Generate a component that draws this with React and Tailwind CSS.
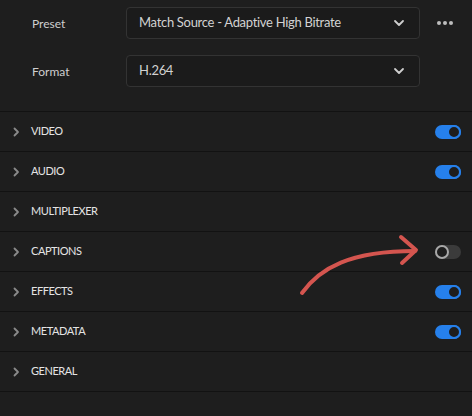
import { useState } from 'react'

function ChevronDown() {
  return (
    <svg width="12" height="8" viewBox="0 0 12 8" fill="none" stroke="#cfcfcf" strokeWidth="1.8" strokeLinecap="round" strokeLinejoin="round">
      <path d="M2 2l4 4 4-4" />
    </svg>
  )
}

function ChevronRight() {
  return (
    <svg width="8" height="10" viewBox="0 0 8 10" fill="none" stroke="#8a8a8a" strokeWidth="1.8" strokeLinecap="round" strokeLinejoin="round">
      <path d="M2.5 1.5L6 5l-3.5 3.5" />
    </svg>
  )
}

function Toggle({ on }) {
  return (
    <div className={`w-[26px] h-[14px] rounded-full flex items-center ${on ? 'bg-[#2680eb] justify-end' : 'bg-[#3b3b3b] justify-start'}`}>
      <div className={`w-[14px] h-[14px] rounded-full bg-[#1e1e1e] border-2 ${on ? 'border-[#2680eb]' : 'border-[#a8a8a8]'}`} />
    </div>
  )
}

function Select({ value }) {
  return (
    <div className="w-[294px] h-[32px] rounded-[4px] border border-[#333] bg-[#1b1b1b] flex items-center justify-between pl-3 pr-[14px]">
      <span className="text-[13px] text-[#d2d2d2] tracking-[-0.3px]">{value}</span>
      <ChevronDown />
    </div>
  )
}

const sections = [
  { name: 'VIDEO', toggle: true },
  { name: 'AUDIO', toggle: true },
  { name: 'MULTIPLEXER' },
  { name: 'CAPTIONS', toggle: false },
  { name: 'EFFECTS', toggle: true },
  { name: 'METADATA', toggle: true },
  { name: 'GENERAL' },
]

export default function App() {
  const [open] = useState({})
  return (
    <div className="relative w-[472px] h-[416px] bg-[#1e1e1e] overflow-hidden" style={{ fontFamily: 'Lato, "Noto Sans", sans-serif' }}>
      <div className="pt-[7px] pb-[24px] flex flex-col gap-[16px] border-b border-[#121212]">
        <div className="flex items-center">
          <div className="w-[126px] pl-[32px] pt-[2px] text-[12px] text-[#cfcfcf]">Preset</div>
          <Select value="Match Source - Adaptive High Bitrate" />
          <div className="ml-[17px] flex gap-[2px]">
            <span className="w-[4px] h-[4px] rounded-full bg-[#bdbdbd]" />
            <span className="w-[4px] h-[4px] rounded-full bg-[#bdbdbd]" />
            <span className="w-[4px] h-[4px] rounded-full bg-[#bdbdbd]" />
          </div>
        </div>
        <div className="flex items-center">
          <div className="w-[126px] pl-[32px] pt-[2px] text-[12px] text-[#cfcfcf]">Format</div>
          <Select value="H.264" />
        </div>
      </div>
      {sections.map(s => (
        <div key={s.name} className="h-[40px] flex items-center border-b border-[#121212] pl-[12px] pr-[11px]">
          <ChevronRight />
          <span className="ml-[11px] text-[11px] font-normal text-[#e4e4e4] tracking-[-0.45px]">{s.name}</span>
          <div className="ml-auto">
            {s.toggle !== undefined && <Toggle on={open[s.name] ?? s.toggle} />}
          </div>
        </div>
      ))}
      <svg className="absolute left-0 top-0 pointer-events-none" width="472" height="416" fill="none" stroke="#d4554f" strokeWidth="4" strokeLinecap="round" strokeLinejoin="round">
        <path d="M302 293C320 268 350 251 415 251" />
        <path d="M401 237L416 250L402 263" />
      </svg>
    </div>
  )
}
